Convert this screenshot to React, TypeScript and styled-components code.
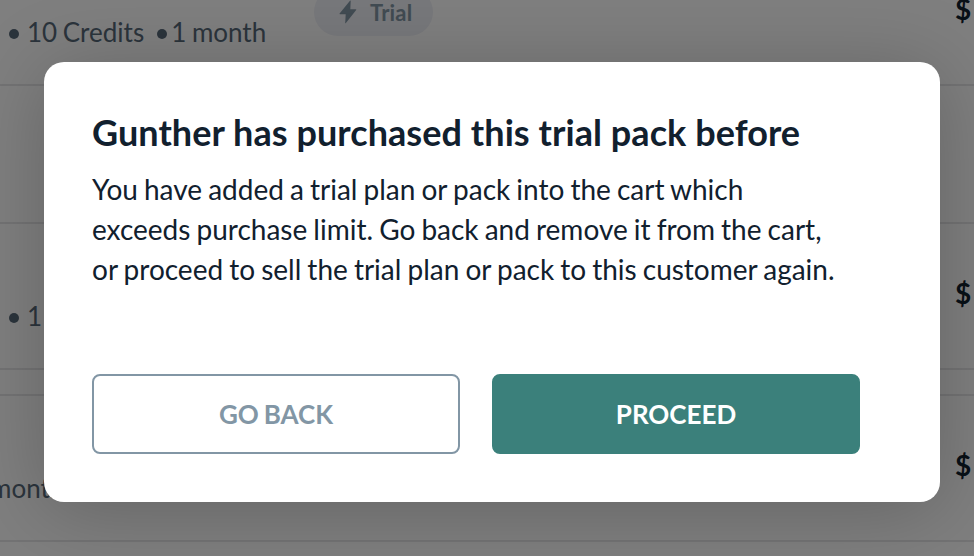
import React from "react";
import styled, { createGlobalStyle } from "styled-components";

const GlobalStyle = createGlobalStyle`
  * { box-sizing: border-box; }
  body { margin: 0; overflow: hidden; font-family: "Lato", sans-serif; }
`;

const Screen = styled.div`
  position: relative;
  width: 974px;
  height: 556px;
  overflow: hidden;
  background: #ffffff;
`;

const Row = styled.section<{ $height: number; $pad?: number }>`
  display: flex;
  align-items: flex-start;
  height: ${(p) => p.$height}px;
  padding-top: ${(p) => p.$pad ?? 0}px;
  border-bottom: 2px solid #e6e6e8;
`;

const Details = styled.div<{ $offset?: number; $width?: number }>`
  display: flex;
  align-items: center;
  flex: none;
  width: ${(p) => p.$width ?? 314}px;
  height: 32px;
  margin-left: ${(p) => p.$offset ?? 0}px;
  font-size: 26px;
  line-height: 32px;
  word-spacing: -1px;
  color: #576878;
  white-space: pre;
`;

const Dot = styled.i<{ $left: number; $right: number }>`
  flex: none;
  width: 10px;
  height: 10px;
  margin: 4px ${(p) => p.$right}px 0 ${(p) => p.$left}px;
  border-radius: 50%;
  background: #576878;
`;

const TrialBadge = styled.span`
  display: flex;
  align-items: center;
  flex: none;
  width: 119px;
  height: 48px;
  margin-top: -28px;
  padding-left: 24px;
  gap: 12px;
  border-radius: 24px;
  background: #eff0f6;
  color: #8296a5;
  font-size: 22px;
  font-weight: 700;
  letter-spacing: 0.2px;
`;

const Price = styled.strong`
  margin: -23px 0 0 auto;
  width: 19px;
  white-space: nowrap;
  font-size: 28px;
  line-height: 32px;
  color: #11202e;
`;

const Backdrop = styled.div`
  position: absolute;
  inset: 0;
  display: flex;
  align-items: flex-start;
  padding: 62px 34px 54px 44px;
  background: rgba(0, 0, 0, 0.5);
`;

const Dialog = styled.div`
  width: 896px;
  height: 440px;
  padding: 46px 48px 48px;
  border-radius: 20px;
  background: #ffffff;
  color: #11202e;
  box-shadow: 0 8px 80px rgba(0, 0, 0, 0.22);
`;

const Title = styled.h1`
  margin: 0 0 13px;
  font-size: 36px;
  line-height: 48px;
  font-weight: 700;
  letter-spacing: 0.06px;
`;

const Message = styled.p`
  margin: 0;
  font-size: 28px;
  line-height: 40px;
  word-spacing: -1.08px;
  white-space: nowrap;
`;

const Actions = styled.div`
  display: flex;
  gap: 32px;
  margin-top: 85px;
`;

const Button = styled.button<{ $primary?: boolean }>`
  width: 368px;
  height: 80px;
  padding: 0;
  border: 2px solid ${(p) => (p.$primary ? "#3b807b" : "#8296a5")};
  border-radius: 8px;
  background: ${(p) => (p.$primary ? "#3b807b" : "#ffffff")};
  color: ${(p) => (p.$primary ? "#ffffff" : "#8296a5")};
  font: 700 26px "Lato", sans-serif;
  word-spacing: -1.5px;
`;

const Bolt = () => (
  <svg width="20" height="24" viewBox="0 0 20 24" fill="currentColor" aria-hidden="true">
    <path d="M12 .7 1.6 13.4q-.5.8.5.8h5.6L7.2 23q.1.6.7 0L18.2 10q.5-.8-.5-.8h-5.4L12.7 1q0-.8-.7-.3Z" />
  </svg>
);

export default function App() {
  return (
    <>
      <GlobalStyle />
      <Screen>
        <Row $height={86} $pad={16}>
          <Details>
            <Dot $left={9} $right={8} />10 Credits<Dot $left={13} $right={4} />1 month
          </Details>
          <TrialBadge><Bolt />Trial</TrialBadge>
          <Price>$</Price>
        </Row>
        <Row $height={138} />
        <Row $height={146} $pad={76}>
          <Details $width={400}>
            <Dot $left={9} $right={8} />1 Credit<Dot $left={13} $right={4} />1 month
          </Details>
          <Price>$</Price>
        </Row>
        <Row $height={26} />
        <Row $height={146} $pad={76}>
          <Details $offset={-10} $width={300}>month</Details>
          <Price>$</Price>
        </Row>
        <Backdrop>
          <Dialog role="dialog" aria-modal="true">
            <Title>Gunther has purchased this trial pack before</Title>
            <Message>
              You have added a trial plan or pack into the cart which<br />
              exceeds purchase limit. Go back and remove it from the cart,<br />
              or proceed to sell the trial plan or pack to this customer again.
            </Message>
            <Actions>
              <Button>GO BACK</Button>
              <Button $primary>PROCEED</Button>
            </Actions>
          </Dialog>
        </Backdrop>
      </Screen>
    </>
  );
}
